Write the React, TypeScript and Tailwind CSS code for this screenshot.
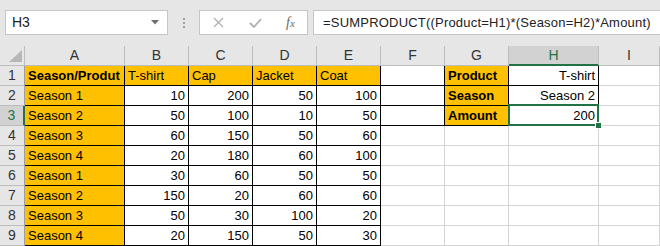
import React from "react";

type Cell = { v: string; bold?: boolean; right?: boolean; fill?: boolean; black?: boolean };

const cols = ["A", "B", "C", "D", "E", "F", "G", "H", "I"];

const table: (string | number)[][] = [
  ["Season 1", 10, 200, 50, 100],
  ["Season 2", 50, 100, 10, 50],
  ["Season 3", 60, 150, 50, 60],
  ["Season 4", 20, 180, 60, 100],
  ["Season 1", 30, 60, 50, 50],
  ["Season 2", 150, 20, 60, 60],
  ["Season 3", 50, 30, 100, 20],
  ["Season 4", 20, 150, 50, 30],
];

const lookup: [string, string][] = [
  ["Product", "T-shirt"],
  ["Season", "Season 2"],
  ["Amount", "200"],
];

function buildRow(r: number): Cell[] {
  const row: Cell[] = [];
  if (r === 0) {
    row.push({ v: "Season/Produt", bold: true, fill: true, black: true });
    for (const h of ["T-shirt", "Cap", "Jacket", "Coat"]) row.push({ v: h, fill: true, black: true });
  } else {
    const d = table[r - 1];
    row.push({ v: String(d[0]), fill: true, black: true });
    for (let i = 1; i < 5; i++) row.push({ v: String(d[i]), right: true, black: true });
  }
  // F
  row.push({ v: "", black: r < 3 });
  if (r < 3) {
    row.push({ v: lookup[r][0], bold: true, fill: true, black: true });
    row.push({ v: lookup[r][1], right: true, black: true });
  } else {
    row.push({ v: "" });
    row.push({ v: "" });
  }
  row.push({ v: "" });
  return row;
}

function CornerCell() {
  return (
    <div className="relative h-[20px] border-r border-b border-[#bdbdbd] bg-[#e6e6e6]">
      <svg className="absolute left-[9px] top-[4px]" width="13" height="12" viewBox="0 0 13 12">
        <polygon points="13,0 13,12 0,12" fill="#b7b7b7" />
      </svg>
    </div>
  );
}

export default function App() {
  const font = { fontFamily: '"Liberation Sans", Arial, sans-serif' };
  return (
    <div className="h-[246px] w-[660px] overflow-hidden bg-white" style={font}>
      {/* name box + formula bar */}
      <div className="flex h-[46px] items-start bg-[#e6e6e6] pl-[5px] pt-[10px]">
        <div className="flex h-[25px] w-[163px] items-center justify-between border border-[#c6c6c6] bg-white pl-[6px] pr-[8px] text-[14px] text-[#222]">
          <span>H3</span>
          <svg width="8" height="5" viewBox="0 0 8 5">
            <polygon points="0,0 8,0 4,4.5" fill="#6d6d6d" />
          </svg>
        </div>
        <div className="flex h-[25px] w-[31px] flex-col items-center justify-center gap-[2px]">
          <span className="h-[2px] w-[2px] bg-[#a0a0a0]" />
          <span className="h-[2px] w-[2px] bg-[#a0a0a0]" />
          <span className="h-[2px] w-[2px] bg-[#a0a0a0]" />
        </div>
        <div className="flex h-[25px] w-[109px] items-center border border-[#c6c6c6] bg-white">
          <svg className="ml-[13px]" width="11" height="11" viewBox="0 0 11 11">
            <path d="M1 1 L10 10 M10 1 L1 10" stroke="#b0b0b0" strokeWidth="1.3" />
          </svg>
          <svg className="ml-[25px]" width="13" height="10" viewBox="0 0 13 10">
            <path d="M1 5 L5 9 L12 1" stroke="#b0b0b0" strokeWidth="1.8" fill="none" />
          </svg>
          <span
            className="ml-[24px] text-[14px] italic text-[#6a6a6a]"
            style={{ fontFamily: '"Liberation Serif", "Times New Roman", serif' }}
          >
            f<span className="text-[11px]">x</span>
          </span>
        </div>
        <div className="ml-[5px] flex h-[25px] flex-1 items-center overflow-hidden whitespace-nowrap border border-r-0 border-[#c6c6c6] bg-white pl-[9px] text-[13px] tracking-[0.2px] text-[#222]">
          =SUMPRODUCT((Product=H1)*(Season=H2)*Amount)
        </div>
      </div>

      {/* sheet */}
      <div className="grid grid-cols-[25px_100px_64px_64px_64px_64px_64px_64px_90px_1fr] text-[13px] text-black">
        <CornerCell />
        {cols.map((c) =>
          c === "H" ? (
            <div
              key={c}
              className="flex h-[20px] items-center justify-center border-r border-b-2 border-r-[#bdbdbd] border-b-[#217346] bg-[#d2d2d2] text-[14px] text-[#217346]"
            >
              {c}
            </div>
          ) : (
            <div
              key={c}
              className="flex h-[20px] items-center justify-center border-r border-b border-[#bdbdbd] bg-[#e6e6e6] text-[14px] text-[#333]"
            >
              {c}
            </div>
          )
        )}

        {Array.from({ length: 9 }, (_, r) => {
          const cells = buildRow(r);
          return (
            <React.Fragment key={r}>
              {r === 2 ? (
                <div className="flex h-[20px] items-center justify-center border-r-2 border-b border-r-[#217346] border-b-[#bdbdbd] bg-[#d2d2d2] text-[14px] text-[#217346]">
                  {r + 1}
                </div>
              ) : (
                <div className="flex h-[20px] items-center justify-center border-r border-b border-[#9e9e9e] border-b-[#bdbdbd] bg-[#e6e6e6] text-[14px] text-[#333]">
                  {r + 1}
                </div>
              )}
              {cells.map((cell, ci) => (
                <div
                  key={ci}
                  className={
                    "relative flex h-[20px] items-end overflow-visible whitespace-nowrap border-r border-b px-[3px] pb-[1px] leading-[17px] " +
                    (cell.black ? "border-black " : "border-[#d4d4d4] ") +
                    (cell.fill ? "bg-[#ffc000] " : "") +
                    (cell.bold ? "font-bold " : "") +
                    (cell.right ? "justify-end " : "")
                  }
                >
                  {cell.v}
                  {r === 2 && ci === 7 ? (
                    <>
                      <span className="pointer-events-none absolute left-[-1px] right-[-1px] top-[-2px] bottom-[-1px] z-10 border-2 border-[#217346]" />
                      <span className="absolute right-[-4px] bottom-[-4px] z-20 h-[7px] w-[7px] border border-white bg-[#217346]" />
                    </>
                  ) : null}
                </div>
              ))}
            </React.Fragment>
          );
        })}
      </div>
    </div>
  );
}
